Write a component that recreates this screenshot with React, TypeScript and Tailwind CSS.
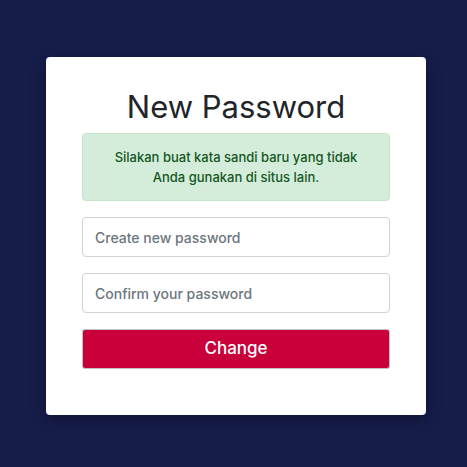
export default function App() {
  return (
    <div
      className="min-h-[467px] w-full bg-[#161d4b] flex items-start justify-start pl-[46px] pt-[57px]"
      style={{ fontFamily: "Inter, 'Noto Sans', sans-serif" }}
    >
      <div className="w-[380px] bg-white rounded-[4px] shadow-[0_4px_16px_rgba(0,0,0,0.35)] px-[36px] pt-[30px] pb-[46px]">
        <h1 className="text-center text-[31px] leading-[40px] text-[#212529] font-normal mb-[6px]">
          New Password
        </h1>
        <div className="bg-[#d4edda] border border-[#c3e6cb] rounded-[4px] text-[#155724] text-[13px] font-medium leading-[20px] text-center px-5 py-[13px] mb-[16px]">
          Silakan buat kata sandi baru yang tidak
          <br />
          Anda gunakan di situs lain.
        </div>
        <div className="flex flex-col gap-[16px]">
          <input
            type="password"
            placeholder="Create new password"
            className="h-[40px] w-full border border-[#ced4da] rounded-[4px] px-3 text-[14px] text-[#495057] placeholder:text-[#6c757d] placeholder:font-medium outline-none"
          />
          <input
            type="password"
            placeholder="Confirm your password"
            className="h-[40px] w-full border border-[#ced4da] rounded-[4px] px-3 text-[14px] text-[#495057] placeholder:text-[#6c757d] placeholder:font-medium outline-none"
          />
          <button className="h-[40px] w-full bg-[#c9003a] text-white text-[17px] font-medium rounded-[3px] border border-[#c0c0c8]">
            Change
          </button>
        </div>
      </div>
    </div>
  );
}
